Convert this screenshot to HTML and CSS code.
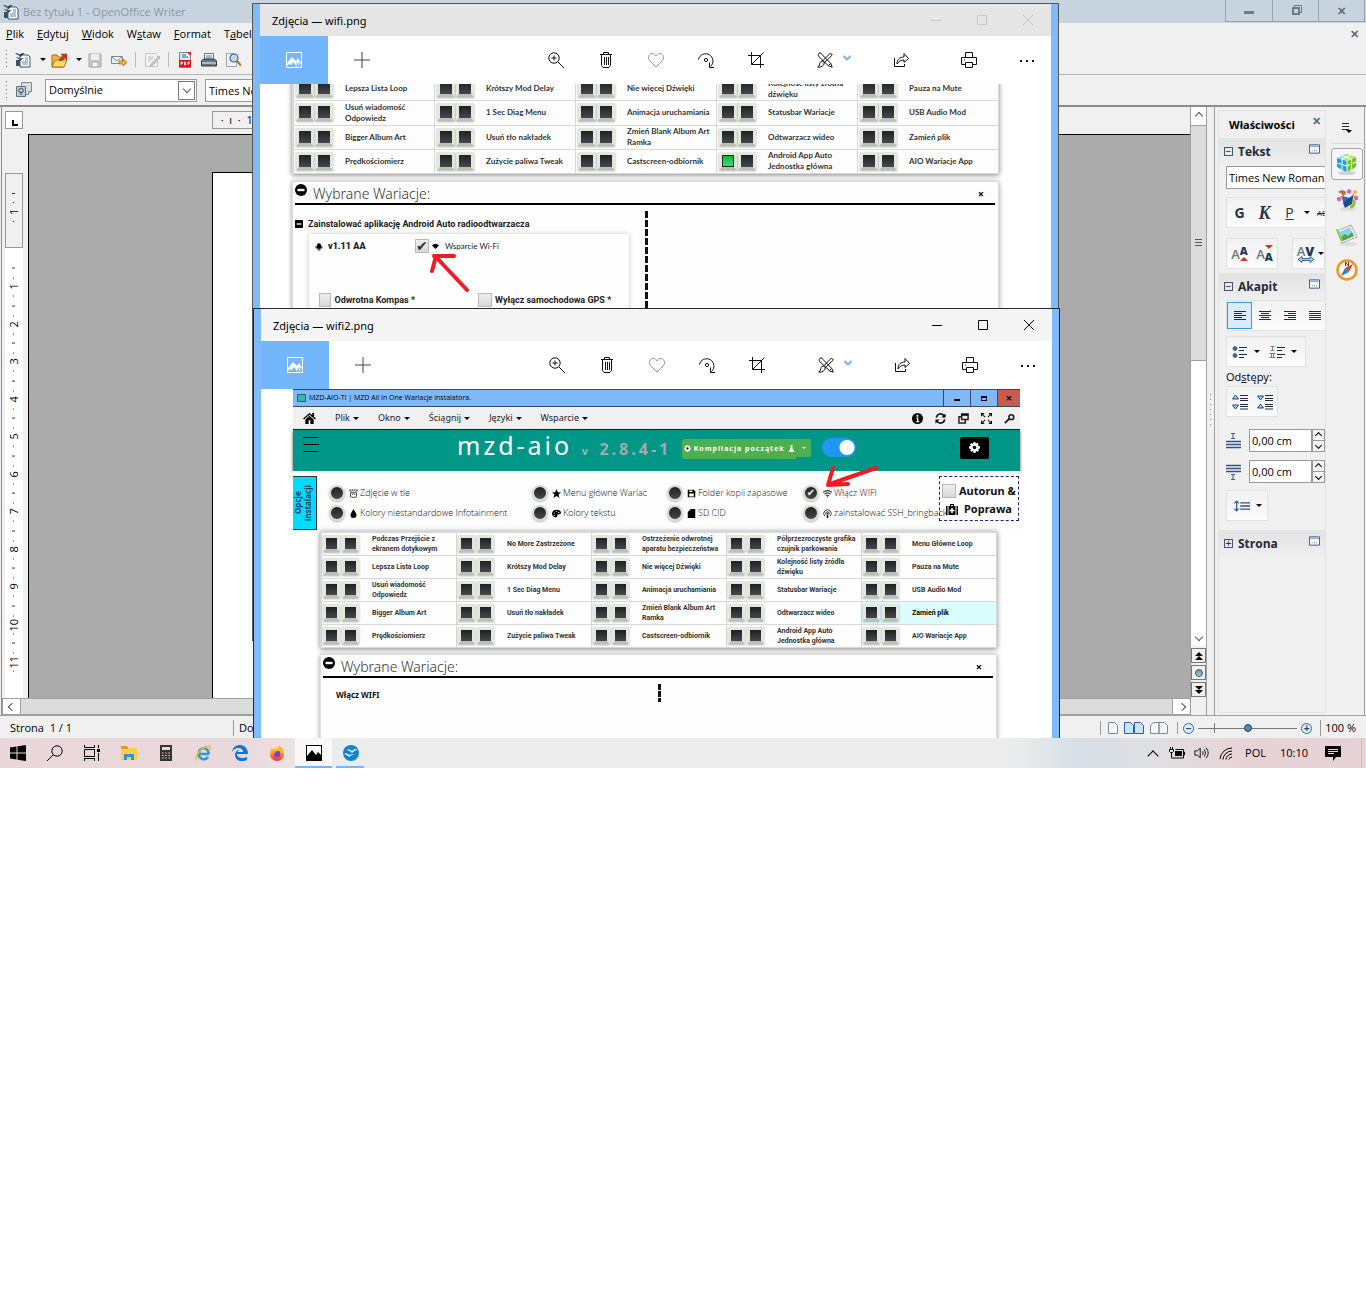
FILE: index.html
```
<!DOCTYPE html>
<html lang="pl">
<head>
    <meta charset="UTF-8">
    <meta name="viewport" content="width=device-width, initial-scale=1.0">
    <title>Bez tytułu 1 - OpenOffice Writer</title>
    <link rel="stylesheet" href="styles.css">
</head>
<body>
<svg class="sprite" aria-hidden="true">
    <defs>
        <linearGradient id="steel" x1="0" y1="0" x2="0" y2="1"><stop offset="0" stop-color="#a9cbe2"/><stop offset="1" stop-color="#2f6588"/></linearGradient>
        <linearGradient id="flame" x1="0" y1="0" x2="0" y2="1"><stop offset="0" stop-color="#ffe04a"/><stop offset=".5" stop-color="#ff8a1e"/><stop offset="1" stop-color="#f5245d"/></linearGradient>
    </defs>
    <symbol id="writer" viewBox="0 0 16 16"><path d="M5 3h8l2 2v10H5z" fill="#fff" stroke="#35546e"/><path d="M10 6h3M10 8h3M7 10h6M7 12h6" stroke="#6b8299"/><path d="M0 1c3 0 4 1 5 2 1-2 3-2 5-2-2 1-3 2-4 4C4 3 2 3 0 1zM1 5c2 0 3 1 4 2 1-1 2-1 4-1-2 1-3 2-3 3C4 7 3 7 1 5z" fill="#1f3b52"/><path d="M1 8h4v6H1z" fill="#35546e"/></symbol>
    <symbol id="folder" viewBox="0 0 16 16"><path d="M1 15V3h5l1 2h5v10z" fill="#f5b92e" stroke="#a8691a"/><path d="M1 15l3-7h12l-3 7z" fill="#fddc6c" stroke="#a8691a"/><path d="M8 8l4-4-2-2h6v6l-2-2-4 3z" fill="#c8391b" stroke="#8a220c" stroke-width=".5"/></symbol>
    <symbol id="save" viewBox="0 0 16 16"><path d="M2 2h12v13H2z" fill="#c9c9c9" stroke="#a8a8a8"/><path d="M4 2h8v6H4z" fill="#eee"/><path d="M5 10h6v5H5z" fill="#f6f6f6" stroke="#aaa"/></symbol>
    <symbol id="mail" viewBox="0 0 16 16"><path d="M.5 4.5h11v7H.5z" fill="#eef4f9" stroke="#7a8792"/><path d="M1 5l5 4 5-4" fill="none" stroke="#7a8792"/><path d="M8 9h4V7l4 3.500-4 3.500v-2H8z" fill="#f8b133" stroke="#a4600e" stroke-width=".7"/></symbol>
    <symbol id="edit" viewBox="0 0 16 16"><path d="M1.500 1.500h10l2 2v11h-12z" fill="#f2f2f2" stroke="#c6c6c6"/><path d="M4 5h6M4 7h5M4 9h3" stroke="#c6c6c6"/><path d="M15 4L8 11l-2 3 3-1 7-7z" fill="#cfcfcf" stroke="#b3b3b3"/></symbol>
    <symbol id="pdf" viewBox="0 0 16 16"><path d="M2.500.500h8l3 3v12h-11z" fill="#dce9f3" stroke="#6b8299"/><path d="M5 3h4M5 5h6" stroke="#35679a"/><path d="M10 0l4 4V0z" fill="#e0262c"/><path d="M2 8h12v7H2z" fill="#d8141c"/><path d="M4 13v-3h1.500v1.500H4M7.500 10v3h1v-3zM11 13v-3h2M11 11.500h1.500" fill="none" stroke="#fff" stroke-width=".8"/></symbol>
    <symbol id="printer" viewBox="0 0 16 16"><path d="M3.500 1.500h9v7h-9z" fill="#fff" stroke="#5c7387"/><path d="M5 4h6M5 6h6" stroke="#3a76a8"/><path d="M.500 9l2-2h11l2 2v5H.500z" fill="#6e7479" stroke="#34393d"/><path d="M1 10h14v2H1z" fill="#b6babd"/><path d="M11 12h3" stroke="#4bd13a"/></symbol>
    <symbol id="preview" viewBox="0 0 16 16"><path d="M1.500 1.500h8l2 2v11h-10z" fill="#eef3f7" stroke="#9aa6b0"/><circle cx="9" cy="6" r="4" fill="#bfdaf0" stroke="#46627b" stroke-width="1.200"/><path d="M12 9l4 4.500" stroke="#b86a17" stroke-width="2"/></symbol>
    <symbol id="styles" viewBox="0 0 16 16"><path d="M5.500.500h10v9l-3 3h-7z" fill="#d7dfe6" stroke="#7c8893"/><path d="M12.500 12.500v-3h3" fill="#fff" stroke="#7c8893"/><path d="M.500 4.500h9v10h-9z" fill="#b9cad8" stroke="#5e7385"/><path d="M3 7h4v3H3zM5 10v3" fill="#fff" stroke="#2a4055"/></symbol>

    <symbol id="photo" viewBox="0 0 16 16"><path d="M.500.500h15v15H.500z" fill="none" stroke="currentColor"/><path d="M1 11l5-6 4 4 2-3 3 5v1l-3-2 2 5-4-5 1 5-4-5-2 3-2-1-3 3z" fill="currentColor" stroke="none"/></symbol>
    <symbol id="plus" viewBox="0 0 16 16"><path d="M8 0v16M0 8h16" stroke="#444" fill="none"/></symbol>
    <symbol id="zoom-in" viewBox="0 0 16 16"><circle cx="6" cy="6" r="5.200"/><path d="M3.500 6h5M6 3.500v5M10 10l6 6"/></symbol>
    <symbol id="trash" viewBox="0 0 16 16"><path d="M2 2.500h12M5.500 2.500v-2h5v2M3.500 2.500v11l1.500 2h6l1.500-2v-11M6.500 5v8M8.500 5v8M10.500 5v8"/></symbol>
    <symbol id="heart" viewBox="0 0 16 16"><path d="M8 15L1.500 8.500C-1 5 1.500 1.500 4 1.500c2 0 3.500 1 4 2.500.500-1.500 2-2.500 4-2.500 2.500 0 5 3.500 2.500 7z" stroke="#999"/></symbol>
    <symbol id="rotate" viewBox="0 0 16 16"><path d="M.500 7.500A7.300 7.300 0 1 1 12.500 14.500M11.500 10.500v5h4.500"/><circle cx="8" cy="8" r="1.600"/></symbol>
    <symbol id="crop" viewBox="0 0 16 16"><path d="M3.500 0v12.500H16M0 3.500h12.500V16M3.500 12.500L15.500.500"/></symbol>
    <symbol id="tools" viewBox="0 0 16 16"><path d="M3 .8a2.300 2.300 0 0 0-1 4l9.500 9 3.700 1.400-1.400-3.700-9-9.200A2.300 2.300 0 0 0 3 .8zM13.500 1L5.500 9l1.800 1.800L15.300 3zM5.500 9C3 9 3 11 2.500 13L.8 15.200C4 15.500 7 14 7.300 10.800M11.500 13.500l2-2"/></symbol>
    <symbol id="chevron" viewBox="0 0 16 16"><path d="M1 4l7 7 7-7" stroke="#76b6fb" stroke-width="4"/></symbol>
    <symbol id="share" viewBox="0 0 16 16"><path d="M1.500 6v8.500h10V12M4 12c0-5 3-7 7-7V1.500l4.500 5-4.500 4V8c-3 0-5 1-7 4z"/></symbol>
    <symbol id="print" viewBox="0 0 16 16"><path d="M4.500 5.500v-5h7v5M4 12.500H.500v-7h15v7H12M4.500 10.500h7v5h-7zM3 8h1"/></symbol>
    <symbol id="more" viewBox="0 0 16 16"><path d="M1 9h2M7 9h2M13 9h2" stroke-width="2"/></symbol>
    <symbol id="win-min" viewBox="0 0 10 10"><path d="M0 5.500h10"/></symbol>
    <symbol id="win-max" viewBox="0 0 10 10"><path d="M.500.500h9v9h-9z"/></symbol>
    <symbol id="win-close" viewBox="0 0 10 10"><path d="M0 0l10 10M10 0L0 10"/></symbol>

    <symbol id="minus-circle" viewBox="0 0 12 12"><circle cx="6" cy="6" r="6"/><path d="M2.500 4.800h7v2.400h-7z" fill="#fff"/></symbol>
    <symbol id="minus-square" viewBox="0 0 12 12"><rect width="12" height="12" rx="1"/><path d="M2.500 5h7v2h-7z" fill="#fff"/></symbol>
    <symbol id="android" viewBox="0 0 12 12"><path d="M3 4a3 3 0 0 1 6 0v5H3zM1 5h1.500v4H1zM9.500 5H11v4H9.500zM4 9h1.500v3H4zM6.500 9H8v3H6.500zM3 1l1 2M9 1L8 3"/></symbol>
    <symbol id="home" viewBox="0 0 14 12"><path d="M7 0L0 6l1 1 6-5 6 5 1-1-2-2V0h-2v2.500zM7 3L2.500 7v5h3.500V8h2v4h3.500V7z"/></symbol>
    <symbol id="info" viewBox="0 0 12 12"><circle cx="6" cy="6" r="6"/><path d="M5 2h2v2H5zM4.500 5H7v4h1v1H4.500V9h1V6h-1z" fill="#fff"/></symbol>
    <symbol id="refresh" viewBox="0 0 12 12"><path d="M1.500 5A4.500 4.500 0 0 1 10 3.500M10.500 7A4.500 4.500 0 0 1 2 8.500" fill="none" stroke="#111" stroke-width="1.800"/><path d="M11.500.500V5H7zM.500 11.500V7H5z"/></symbol>
    <symbol id="restore" viewBox="0 0 12 12"><path d="M4 1h7v6H4zM3.500 4H1v7h7V7.500" fill="none" stroke="#222" stroke-width="1.600"/><path d="M4 1h7v2H4z"/></symbol>
    <symbol id="expand" viewBox="0 0 12 12"><path d="M0 0h4L0 4zM12 0v4L8 0zM0 12V8l4 4zM12 12H8l4-4z"/><path d="M1 1l3.500 3.500M11 1L7.500 4.500M1 11l3.500-3.500M11 11L7.500 7.500" stroke="#222" stroke-width="1.300"/></symbol>
    <symbol id="wrench" viewBox="0 0 12 12"><path d="M1 11l5-5" stroke="#222" stroke-width="2"/><circle cx="8" cy="4.500" r="2.600" fill="none" stroke="#222" stroke-width="1.800"/></symbol>
    <symbol id="gear" viewBox="0 0 12 12"><path d="M5 0h2l.4 1.800 1.600-1 1.500 1.500-1 1.600L12 5v2l-2 .6.9 1.600-1.500 1.500-1.700-1L7 12H5l-.6-2.200-1.700.9L1.200 9.200l1-1.700L0 7V5l2-.6-.9-1.700 1.500-1.500 1.700 1z"/><circle cx="6" cy="6" r="2" class="hole"/></symbol>
    <symbol id="flask" viewBox="0 0 12 12"><path d="M4 0h4v1H7.500v4L11 12H1l3.500-7V1H4z"/></symbol>
    <symbol id="paw" viewBox="0 0 12 12"><path d="M2 5h8v5a2 2 0 0 1-2 1H4a2 2 0 0 1-2-1zM0 2l2-1 1 3M4 0l1.500 3M8 0L6.500 3M12 2l-2-1-1 3" fill="none" stroke="#333" stroke-width="1.200"/><path d="M4 8l2-2 2 2" fill="none" stroke="#333"/></symbol>
    <symbol id="drop" viewBox="0 0 12 12"><path d="M6 0c1 3 4 5 4 8a4 4 0 0 1-8 0c0-3 3-5 4-8z"/></symbol>
    <symbol id="star" viewBox="0 0 12 12"><path d="M6 0l1.700 4.200L12 4.500 8.700 7.300 10 12 6 9.300 2 12l1.300-4.700L0 4.500l4.300-.3z"/></symbol>
    <symbol id="palette" viewBox="0 0 12 12"><path d="M6 1c4 0 6 2 6 4s-2 2-3 2-2 0-2 2-1 2-2 2C2 11 0 9 0 6s3-5 6-5z"/><path d="M2 5h2v1H2zM5 3h2v1H5zM8 4h2v1H8zM2 8h2v1H2z" fill="#fff"/></symbol>
    <symbol id="floppy" viewBox="0 0 12 12"><path d="M1 1h8l2 2v8H1z"/><path d="M3 2h4v2H3zM3 6h6v4H3z" fill="#fff"/></symbol>
    <symbol id="sdcard" viewBox="0 0 12 12"><path d="M5 0h6v12H1V4z"/></symbol>
    <symbol id="wifi" viewBox="0 0 12 12"><path d="M0 4.500a9 9 0 0 1 12 0M2 7a6 6 0 0 1 8 0M4 9.200a3 3 0 0 1 4 0" fill="none" stroke="#333" stroke-width="1.500"/><path d="M5 10h2L6 11.500z"/></symbol>
    <symbol id="podcast" viewBox="0 0 12 12"><path d="M2.500 9.500a5 5 0 1 1 7 0M4 7.500a2.500 2.500 0 1 1 4 0" fill="none" stroke="#333" stroke-width="1.200"/><circle cx="6" cy="6" r="1.200"/><path d="M5 8h2v4H5z"/></symbol>
    <symbol id="medkit" viewBox="0 0 12 12"><path d="M0 3h1.500v9H0zM10.500 3H12v9h-1.500zM2.500 3H4V1h4v2h1.500v9h-7z"/><path d="M5 2h2v1H5zM5.200 5h1.600v1.700h1.700v1.600H6.800V10H5.200V8.300H3.500V6.700h1.700z" fill="#fff"/></symbol>

    <symbol id="more-win" viewBox="0 0 12 10"><path d="M.500.500h11v9H.500z" fill="#fff" stroke="#2c4d8a"/><path d="M1 1h10v2H1z" fill="#8db4e3"/><path d="M3 7h1M5.500 7h1M8 7h1" stroke="#2c4d8a"/></symbol>
    <symbol id="al-left" viewBox="0 0 14 14"><path d="M1 2.500h12M1 4.500h8M1 6.500h12M1 8.500h8M1 10.500h12" stroke="#222b3a"/></symbol>
    <symbol id="al-center" viewBox="0 0 14 14"><path d="M1 2.500h12M3 4.500h8M1 6.500h12M3 8.500h8M1 10.500h12" stroke="#222b3a"/></symbol>
    <symbol id="al-right" viewBox="0 0 14 14"><path d="M1 2.500h12M5 4.500h8M1 6.500h12M5 8.500h8M1 10.500h12" stroke="#222b3a"/></symbol>
    <symbol id="al-just" viewBox="0 0 14 14"><path d="M1 2.500h12M1 4.500h12M1 6.500h12M1 8.500h12M1 10.500h12" stroke="#222b3a"/></symbol>
    <symbol id="bullets" viewBox="0 0 16 14"><circle cx="3" cy="3.500" r="2" fill="#3f6f96" stroke="#183a5c" stroke-width=".6"/><circle cx="3" cy="10.500" r="2" fill="#3f6f96" stroke="#183a5c" stroke-width=".6"/><path d="M7 2.500h8M7 5.500h5M7 9.500h8M7 12.500h5" stroke="#222b3a"/></symbol>
    <symbol id="numbers" viewBox="0 0 16 14"><path d="M1.500 1.500h4M3.500 1.500v4M1.500 5.500h4M.500 8.500h6M2.500 8.500v4M4.500 8.500v4M.500 12.500h6" stroke="#5c87ad" fill="none"/><path d="M8 2.500h8M8 5.500h5M8 9.500h8M8 12.500h5" stroke="#222b3a"/></symbol>
    <symbol id="sp-out" viewBox="0 0 16 16"><path d="M3.500 1l3 4h-6zM3.500 15l3-4h-6z" fill="#9bd3f5" stroke="#1d4b7d"/><path d="M8 1.500h8M8 4.500h8M8 6.500h8M8 10.500h8M8 12.500h8M8 15h8" stroke="#222b3a"/></symbol>
    <symbol id="sp-in" viewBox="0 0 16 16"><path d="M3.500 6l3-4h-6zM3.500 10l3 4h-6z" fill="#9bd3f5" stroke="#1d4b7d"/><path d="M8 1.500h8M8 4.500h8M8 6.500h8M8 10.500h8M8 12.500h8M8 15h8" stroke="#222b3a"/></symbol>
    <symbol id="sp-above" viewBox="0 0 16 16"><path d="M5 .500h4M7 1v5M5 5.500h4" stroke="#33609a"/><path d="M0 8.500h15M0 11.500h15M0 14.500h15" stroke="#2e5686" stroke-width="1.600"/></symbol>
    <symbol id="sp-below" viewBox="0 0 16 16"><path d="M5 10.500h4M7 11v5M5 15.500h4" stroke="#33609a"/><path d="M0 1.500h15M0 4.500h15M0 7.500h15" stroke="#2e5686" stroke-width="1.600"/></symbol>
    <symbol id="line-sp" viewBox="0 0 18 14"><path d="M3 2v10M.500 4L3 1.500 5.500 4M.500 10L3 12.500 5.500 10" fill="none" stroke="#33609a" stroke-width="1.400"/><path d="M7 3.500h11M7 7h11M7 10.500h11" stroke="#2e5686" stroke-width="1.600"/></symbol>
    <symbol id="swap" viewBox="0 0 16 7"><path d="M0 3.500L4 .500v2h8v-2l4 3-4 3v-2H4v2z" fill="#9bd3f5" stroke="#1d4b7d" stroke-width=".8"/></symbol>
    <symbol id="cube" viewBox="0 0 22 22"><ellipse cx="11" cy="20" rx="9" ry="2" fill="#d3d3d3"/><path d="M1 5l10 3v11l-3-1-7-4z" fill="#1ba0ea"/><path d="M11 8l9-4v10l-9 5z" fill="#6cc81e"/><path d="M1 5l9-4 3 1-8 4z" fill="#8ed9f8"/><path d="M12 1l8 3-9 4-5-2z" fill="#b6ea63"/><path d="M1 10l10 3 9-4M6 6v11M15.500 6v11M11 8v11M6 3l9 3M15 2L6 6" stroke="#fff" fill="none"/></symbol>
    <symbol id="gallery" viewBox="0 0 22 22"><ellipse cx="12" cy="20" rx="8" ry="2" fill="#ddd"/><path d="M2 3c3-3 8-2 8 1l-3 4-1-3z" fill="#c96a28"/><path d="M5 7l10 2 3-5-2 11H8z" fill="#2f6fb5"/><path d="M7 14l10-8-1 9-7 4z" fill="#1d4d86"/><path d="M14 18c4 0 5-4 4-7" stroke="#8cc63e" stroke-width="3" fill="none"/><circle cx="13" cy="2.500" r="2.200" fill="#c45fe0"/><path d="M19 0l1 2 2 1-2 1-1 3-1-3-2-1 2-1z" fill="#f7b51c"/><circle cx="3" cy="10" r="2.200" fill="#ee5aa0"/><circle cx="20" cy="9" r="2.200" fill="#ee5aa0"/></symbol>
    <symbol id="images" viewBox="0 0 22 22"><ellipse cx="12" cy="20" rx="9" ry="2" fill="#ddd"/><path d="M1 7l14-6 6 12-15 6z" fill="#fff" stroke="#a5a5a5"/><path d="M3 8l11-5 4 9-11 5z" fill="#8fd0f2"/><path d="M5 13l4-3 3 2 4-4 2 4-11 5z" fill="#4fa83d"/><path d="M1 5l5 12" stroke="#8cd048" stroke-width="2"/></symbol>
    <symbol id="compass" viewBox="0 0 22 22"><circle cx="11" cy="11" r="9.500" fill="#f6f6f6" stroke="#f0951c" stroke-width="2.500"/><path d="M17 5l-4 8-4-4z" fill="#e2401f"/><path d="M5 17l8-4-4-4z" fill="#2f7fd0"/><path d="M9.500 7V3l3 4V3" fill="none" stroke="#444"/></symbol>
    <symbol id="page1" viewBox="0 0 10 12"><path d="M.500.500h6l3 3v8h-9z"/></symbol>
    <symbol id="page2" viewBox="0 0 20 12"><path d="M.500.500h6l3 3v8h-9zM10.500.500h6l3 3v8h-9z"/></symbol>
    <symbol id="book" viewBox="0 0 18 12"><path d="M3.500.500h5.500v11H.500v-8zM14.500.500H9v11h8.500v-8z"/></symbol>

    <symbol id="windows" viewBox="0 0 16 16"><path d="M0 2.500L6.500 1.500V7.500H0zM7.500 1.300L16 0v7.500H7.500zM0 8.500h6.500v6L0 13.500zM7.500 8.500H16V16l-8.500-1.300z"/></symbol>
    <symbol id="search" viewBox="0 0 16 16"><circle cx="10" cy="6" r="5.200"/><path d="M6.300 9.700L0 16"/></symbol>
    <symbol id="taskview" viewBox="0 0 16 16"><path d="M.500 0v2.500h10V0M.500 4.500h10v7H.500zM.500 16v-2.500h10V16M14.500 0v3M14.500 8v8"/><path d="M13 4h3v3h-3z" fill="#000" stroke="none"/></symbol>
    <symbol id="explorer" viewBox="0 0 16 16"><path d="M0 1h6l1 2h9v12H0z" fill="#ffcf48"/><path d="M0 1h6l1 2v1H0z" fill="#dd9d13"/><path d="M3 15V9h10v6h-3v-3H6v3z" fill="#2f94dd"/></symbol>
    <symbol id="calc" viewBox="0 0 16 16"><path d="M2 0h12v16H2z" fill="#333"/><path d="M4 2h8v3H4z" fill="#eadadd"/><path d="M4 8h8M4 10.500h8M4 13h8" stroke="#eadadd" stroke-width="1.200" stroke-dasharray="1.500 1.700"/></symbol>
    <symbol id="ie" viewBox="0 0 16 16"><path d="M3.500 9h10.500M13 12c-1.500 2.500-5 3-7.500 1S3.500 6.500 5.500 4.500s5.500-1.500 7 .500c1 1.300 1.200 2.500 1 4" fill="none" stroke="#3499d6" stroke-width="2.600"/><path d="M2 15C-2 13 8 0 14 1c2 1 1 3 0 4" fill="none" stroke="#f2bd22" stroke-width="1.500"/></symbol>
    <symbol id="edge" viewBox="0 0 16 16"><path d="M0 7c1-5 4-7 8-7 5 0 8 4 8 9H5c0 4 6 5 10 3v3C9 18 3 15 3 10c0-3 2-5 4-5-1 1-1.500 2-1.500 2H11c0-3-2-4-5-4-2 0-4 1-6 4z" fill="#0a78d4"/></symbol>
    <symbol id="firefox" viewBox="0 0 16 16"><circle cx="8" cy="9" r="7" fill="url(#flame)"/><path d="M9 0c5 3 6 6 6 9l-5-3zM1 9l1-6 3 3z" fill="#ffb52e"/><circle cx="8" cy="9" r="3.200" fill="#7a3bd6"/><path d="M3 6c2-1 4 0 5 1-2 0-3 1-3 3-2-1-2-3-2-4z" fill="#ff9a22"/></symbol>
    <symbol id="photos" viewBox="0 0 16 16"><path d="M0 0h16v16H0z"/><path d="M1 1h14v9l-3-3-2 3-4-5-5 6z" fill="#fff"/></symbol>
    <symbol id="ooffice" viewBox="0 0 16 16"><circle cx="8" cy="8" r="8" fill="#0f84cf"/><path d="M4 5c2-1 4 0 5 1 2-2 4-2 6-1-3 0-4 1-6 3-1-2-3-2-5-3zM1 9c3-1 4 0 5 1 2-1 4-1 6-1-3 1-4 1-6 3-1-2-3-2-5-3z" fill="#fff"/></symbol>
    <symbol id="battery" viewBox="0 0 16 16"><path d="M6 6h7v5H6z" fill="#000"/><path d="M14.500 7h1v3h-1M1.500 2v2M3.500 2v2M.500 4.500h4v2l-1 1h-2l-1-1zM2.500 8v5h12V4.500H6.500" fill="none" stroke="#000"/></symbol>
    <symbol id="sound" viewBox="0 0 18 16"><path d="M1 5.500h3l3-3v11l-3-3H1zM9.500 6q1.500 2 0 4M11.500 4q3 4 0 8M13.500 2q5 6 0 12"/></symbol>
    <symbol id="net" viewBox="0 0 16 16"><path d="M1 14A12 12 0 0 1 13 3M4 14.500A9 9 0 0 1 13 6M7 14.500A6 6 0 0 1 13 9M10 14.500a3 3 0 0 1 3-2.500"/></symbol>
    <symbol id="note" viewBox="0 0 16 16"><path d="M0 1h16v11h-5l-3 4v-4H0z"/><path d="M3 4.500h10M3 6.500h10M3 8.500h6" stroke="#e8d6d9"/></symbol>
</svg>

<div class="desktop">
    <div class="writer">
        <header class="writer-title">
            <svg class="i16"><use href="#writer"/></svg>
            <span>Bez tytułu 1 - OpenOffice Writer</span>
            <div class="writer-controls">
                <button aria-label="Minimalizuj"><i class="bar"></i></button>
                <button aria-label="Przywróć"><i class="box"></i></button>
                <button aria-label="Zamknij">✕</button>
            </div>
        </header>
        <nav class="menubar">
            <a href="#"><u>P</u>lik</a>
            <a href="#"><u>E</u>dytuj</a>
            <a href="#"><u>W</u>idok</a>
            <a href="#">W<u>s</u>taw</a>
            <a href="#"><u>F</u>ormat</a>
            <a href="#">T<u>a</u>bela</a>
            <button class="doc-close" aria-label="Zamknij dokument">✕</button>
        </nav>
        <div class="toolbar">
            <i class="grip"></i>
            <button aria-label="Nowy"><svg class="i16"><use href="#writer"/></svg></button><i class="caret"></i>
            <button aria-label="Otwórz"><svg class="i16"><use href="#folder"/></svg></button><i class="caret"></i>
            <button aria-label="Zapisz"><svg class="i16"><use href="#save"/></svg></button>
            <button aria-label="Wyślij"><svg class="i16"><use href="#mail"/></svg></button>
            <i class="sep"></i>
            <button aria-label="Edytuj plik"><svg class="i16"><use href="#edit"/></svg></button>
            <i class="sep"></i>
            <button aria-label="PDF"><svg class="i16"><use href="#pdf"/></svg></button>
            <button aria-label="Drukuj"><svg class="i16"><use href="#printer"/></svg></button>
            <button aria-label="Podgląd"><svg class="i16"><use href="#preview"/></svg></button>
        </div>
        <div class="toolbar format-bar">
            <i class="grip"></i>
            <button aria-label="Style"><svg class="i16"><use href="#styles"/></svg></button>
            <div class="style-box">
                <select aria-label="Styl akapitu"><option>Domyślnie</option></select>
                <span><i class="ang down"></i></span>
            </div>
            <input class="font-input" aria-label="Czcionka" value="Times New Roman">
        </div>

        <div class="work">
            <div class="editor">
                <div class="ruler-row">
                    <button class="tab-kind" aria-label="Tabulator"><i></i></button>
                    <div class="h-ruler">·&nbsp; ı&nbsp; ·&nbsp; 1</div>
                </div>
                <div class="doc-row">
                    <div class="v-ruler">
                        <div class="v-margin"><span class="tick">1</span></div>
                        <div class="v-body">
                            <span class="tick">1</span><span class="tick">2</span><span class="tick">3</span><span class="tick">4</span>
                            <span class="tick">5</span><span class="tick">6</span><span class="tick">7</span><span class="tick">8</span>
                            <span class="tick">9</span><span class="tick">10</span><span class="tick">11</span>
                        </div>
                    </div>
                    <div class="canvas"><div class="paper"></div></div>
                </div>
                <div class="h-scroll">
                    <button aria-label="W lewo"><i class="ang left"></i></button>
                    <div class="thumb"></div>
                    <button aria-label="W prawo"><i class="ang right"></i></button>
                </div>
            </div>
            <div class="v-scroll">
                <button aria-label="W górę"><i class="ang up"></i></button>
                <div class="thumb"><i></i></div>
                <div class="track"></div>
                <button aria-label="W dół"><i class="ang down"></i></button>
                <div class="nav-btns">
                    <button aria-label="Poprzednia strona"><i class="tri up"></i><i class="tri up"></i></button>
                    <button aria-label="Nawigacja"><i class="ball"></i></button>
                    <button aria-label="Następna strona"><i class="tri"></i><i class="tri"></i></button>
                </div>
            </div>
            <div class="splitter"></div>
            <aside class="sidebar">
                <div class="props">
                    <h2>Właściwości <button aria-label="Zamknij panel">✕</button></h2>
                    <h3><i class="fold">−</i>Tekst<svg class="more-icon"><use href="#more-win"/></svg></h3>
                    <div class="section">
                        <input class="side-font" aria-label="Czcionka" value="Times New Roman">
                        <div class="group wide text-tools">
                            <button><b>G</b></button><button><em>K</em></button><button><u>P</u></button><i class="caret"></i><button class="strike"><s>AB</s></button>
                        </div>
                        <div class="groups">
                            <div class="group size-tools"><button>A<b>A</b><i class="red-up"></i></button><button>A<b>A</b><i class="red-down"></i></button></div>
                            <div class="group space-tools"><button>A<b>V</b><svg><use href="#swap"/></svg></button><i class="caret"></i></div>
                        </div>
                    </div>
                    <h3><i class="fold">−</i>Akapit<svg class="more-icon"><use href="#more-win"/></svg></h3>
                    <div class="section para">
                        <div class="group wide aligns">
                            <button class="on" aria-label="Do lewej"><svg><use href="#al-left"/></svg></button>
                            <button aria-label="Do środka"><svg><use href="#al-center"/></svg></button>
                            <button aria-label="Do prawej"><svg><use href="#al-right"/></svg></button>
                            <button aria-label="Justowanie"><svg><use href="#al-just"/></svg></button>
                        </div>
                        <div class="group lists">
                            <button aria-label="Punktory"><svg><use href="#bullets"/></svg></button><i class="caret"></i>
                            <button aria-label="Numeracja"><svg><use href="#numbers"/></svg></button><i class="caret"></i>
                        </div>
                        <p>Od<u>s</u>tępy:</p>
                        <div class="group spacing">
                            <button aria-label="Zwiększ"><svg class="i16"><use href="#sp-out"/></svg></button>
                            <button aria-label="Zmniejsz"><svg class="i16"><use href="#sp-in"/></svg></button>
                        </div>
                        <label class="spin"><svg class="i16"><use href="#sp-above"/></svg><input value="0,00 cm" aria-label="Nad akapitem"><span><i class="ang up"></i><i class="ang down"></i></span></label>
                        <label class="spin"><svg class="i16"><use href="#sp-below"/></svg><input value="0,00 cm" aria-label="Pod akapitem"><span><i class="ang up"></i><i class="ang down"></i></span></label>
                        <div class="group lines">
                            <button aria-label="Interlinia"><svg><use href="#line-sp"/></svg></button><i class="caret"></i>
                        </div>
                    </div>
                    <h3><i class="fold">+</i>Strona<svg class="more-icon"><use href="#more-win"/></svg></h3>
                </div>
                <div class="side-tabs">
                    <button class="side-menu" aria-label="Menu"><i></i><i class="caret"></i></button>
                    <button class="active" aria-label="Właściwości"><svg><use href="#cube"/></svg></button>
                    <button aria-label="Style"><svg><use href="#gallery"/></svg></button>
                    <button aria-label="Galeria"><svg><use href="#images"/></svg></button>
                    <button aria-label="Nawigator"><svg><use href="#compass"/></svg></button>
                </div>
            </aside>
        </div>

        <footer class="statusbar">
            <span class="page-no">Strona&nbsp; 1 / 1</span>
            <span class="page-style">Domyślnie</span>
            <div class="views">
                <svg class="v1"><use href="#page1"/></svg>
                <svg class="v2"><use href="#page2"/></svg>
                <svg class="v3"><use href="#book"/></svg>
            </div>
            <div class="zoomer">
                <i class="knob">−</i>
                <input type="range" min="0" max="100" value="50" aria-label="Powiększenie">
                <i class="knob">+</i>
            </div>
            <span class="percent">100 %</span>
        </footer>
    </div>

    <section class="window back">
        <header class="win-title">
            <span>Zdjęcia — wifi.png</span>
            <button aria-label="Minimalizuj"><svg><use href="#win-min"/></svg></button>
            <button aria-label="Maksymalizuj"><svg><use href="#win-max"/></svg></button>
            <button aria-label="Zamknij"><svg><use href="#win-close"/></svg></button>
        </header>
        <div class="photo-bar">
            <button class="all" aria-label="Kolekcja"><svg class="i16"><use href="#photo"/></svg></button>
            <button class="add" aria-label="Dodaj"><svg class="i16"><use href="#plus"/></svg></button>
            <button aria-label="Powiększ"><svg class="i16"><use href="#zoom-in"/></svg></button>
            <button aria-label="Usuń"><svg class="i16"><use href="#trash"/></svg></button>
            <button aria-label="Ulubione"><svg class="i16"><use href="#heart"/></svg></button>
            <button aria-label="Obróć"><svg class="i16"><use href="#rotate"/></svg></button>
            <button aria-label="Przytnij"><svg class="i16"><use href="#crop"/></svg></button>
            <button class="tools" aria-label="Edytuj"><svg class="i16"><use href="#tools"/></svg><svg class="chev"><use href="#chevron"/></svg></button>
            <button class="far" aria-label="Udostępnij"><svg class="i16"><use href="#share"/></svg></button>
            <button class="far" aria-label="Drukuj"><svg class="i16"><use href="#print"/></svg></button>
            <button class="dots" aria-label="Więcej"><svg class="i16"><use href="#more"/></svg></button>
        </div>
        <div class="photo-view">
            <div class="shot shot-one">
                <div class="variants">
                    <div><input type="radio" name="a1" id="a1"><input type="radio" name="a1" aria-label="Usuń"><label for="a1">Lepsza Lista Loop</label></div>
                    <div><input type="radio" name="a2" id="a2"><input type="radio" name="a2" aria-label="Usuń"><label for="a2">Krótszy Mod Delay</label></div>
                    <div><input type="radio" name="a3" id="a3"><input type="radio" name="a3" aria-label="Usuń"><label for="a3">Nie więcej Dźwięki</label></div>
                    <div><input type="radio" name="a4" id="a4"><input type="radio" name="a4" aria-label="Usuń"><label for="a4">Kolejność listy źródła<br>dźwięku</label></div>
                    <div><input type="radio" name="a5" id="a5"><input type="radio" name="a5" aria-label="Usuń"><label for="a5">Pauza na Mute</label></div>
                    <div><input type="radio" name="a6" id="a6"><input type="radio" name="a6" aria-label="Usuń"><label for="a6">Usuń wiadomość<br>Odpowiedz</label></div>
                    <div><input type="radio" name="a7" id="a7"><input type="radio" name="a7" aria-label="Usuń"><label for="a7">1 Sec Diag Menu</label></div>
                    <div><input type="radio" name="a8" id="a8"><input type="radio" name="a8" aria-label="Usuń"><label for="a8">Animacja uruchamiania</label></div>
                    <div><input type="radio" name="a9" id="a9"><input type="radio" name="a9" aria-label="Usuń"><label for="a9">Statusbar Wariacje</label></div>
                    <div><input type="radio" name="a10" id="a10"><input type="radio" name="a10" aria-label="Usuń"><label for="a10">USB Audio Mod</label></div>
                    <div><input type="radio" name="a11" id="a11"><input type="radio" name="a11" aria-label="Usuń"><label for="a11">Bigger Album Art</label></div>
                    <div><input type="radio" name="a12" id="a12"><input type="radio" name="a12" aria-label="Usuń"><label for="a12">Usuń tło nakładek</label></div>
                    <div><input type="radio" name="a13" id="a13"><input type="radio" name="a13" aria-label="Usuń"><label for="a13">Zmień Blank Album Art<br>Ramka</label></div>
                    <div><input type="radio" name="a14" id="a14"><input type="radio" name="a14" aria-label="Usuń"><label for="a14">Odtwarzacz wideo</label></div>
                    <div><input type="radio" name="a15" id="a15"><input type="radio" name="a15" aria-label="Usuń"><label for="a15">Zamień plik</label></div>
                    <div><input type="radio" name="a16" id="a16"><input type="radio" name="a16" aria-label="Usuń"><label for="a16">Prędkościomierz</label></div>
                    <div><input type="radio" name="a17" id="a17"><input type="radio" name="a17" aria-label="Usuń"><label for="a17">Zużycie paliwa Tweak</label></div>
                    <div><input type="radio" name="a18" id="a18"><input type="radio" name="a18" aria-label="Usuń"><label for="a18">Castscreen-odbiornik</label></div>
                    <div><input type="radio" name="a19" id="a19" checked><input type="radio" name="a19" aria-label="Usuń"><label for="a19">Android App Auto<br>Jednostka główna</label></div>
                    <div><input type="radio" name="a20" id="a20"><input type="radio" name="a20" aria-label="Usuń"><label for="a20">AIO Wariacje App</label></div>
                </div>
                <div class="chosen">
                    <h4><svg><use href="#minus-circle"/></svg><span>Wybrane Wariacje:</span><button aria-label="Zamknij">×</button></h4>
                    <div class="chosen-cols">
                        <div>
                            <p class="app-head"><svg><use href="#minus-square"/></svg>Zainstalować aplikację Android Auto radioodtwarzacza</p>
                            <div class="app-card">
                                <b><svg><use href="#android"/></svg>v1.11 AA</b>
                                <label class="wifi-opt"><input type="checkbox" checked><svg viewBox="0 0 12 10"><path d="M0 4q6-6 12 0L6 10z"/></svg>Wsparcie Wi-Fi</label>
                                <label><input type="checkbox">Odwrotna Kompas *</label>
                                <label><input type="checkbox">Wyłącz samochodowa GPS *</label>
                            </div>
                        </div>
                        <div class="dashes"></div>
                    </div>
                </div>
                <svg class="arrow arrow-one" viewBox="0 0 42 42"><path d="M37 38L6 5M2 19L6 4M4 4h20"/></svg>
            </div>
        </div>
    </section>

    <section class="window front">
        <header class="win-title">
            <span>Zdjęcia — wifi2.png</span>
            <button aria-label="Minimalizuj"><svg><use href="#win-min"/></svg></button>
            <button aria-label="Maksymalizuj"><svg><use href="#win-max"/></svg></button>
            <button aria-label="Zamknij"><svg><use href="#win-close"/></svg></button>
        </header>
        <div class="photo-bar">
            <button class="all" aria-label="Kolekcja"><svg class="i16"><use href="#photo"/></svg></button>
            <button class="add" aria-label="Dodaj"><svg class="i16"><use href="#plus"/></svg></button>
            <button aria-label="Powiększ"><svg class="i16"><use href="#zoom-in"/></svg></button>
            <button aria-label="Usuń"><svg class="i16"><use href="#trash"/></svg></button>
            <button aria-label="Ulubione"><svg class="i16"><use href="#heart"/></svg></button>
            <button aria-label="Obróć"><svg class="i16"><use href="#rotate"/></svg></button>
            <button aria-label="Przytnij"><svg class="i16"><use href="#crop"/></svg></button>
            <button class="tools" aria-label="Edytuj"><svg class="i16"><use href="#tools"/></svg><svg class="chev"><use href="#chevron"/></svg></button>
            <button class="far" aria-label="Udostępnij"><svg class="i16"><use href="#share"/></svg></button>
            <button class="far" aria-label="Drukuj"><svg class="i16"><use href="#print"/></svg></button>
            <button class="dots" aria-label="Więcej"><svg class="i16"><use href="#more"/></svg></button>
        </div>
        <div class="photo-view">
            <div class="shot shot-two">
                <div class="aio-title">
                    <i class="aio-logo"></i><span>MZD-AIO-TI | MZD All In One Wariacje instalatora.</span>
                    <button aria-label="Minimalizuj"><i class="m"></i></button><button aria-label="Maksymalizuj"><i class="x"></i></button><button class="red" aria-label="Zamknij">×</button>
                </div>
                <nav class="aio-menu">
                    <svg class="home"><use href="#home"/></svg>
                    <a href="#">Plik<i class="caret"></i></a>
                    <a href="#">Okno<i class="caret"></i></a>
                    <a href="#">Ściągnij<i class="caret"></i></a>
                    <a href="#">Języki<i class="caret"></i></a>
                    <a href="#">Wsparcie<i class="caret"></i></a>
                    <div class="aio-icons">
                        <svg><use href="#info"/></svg><svg><use href="#refresh"/></svg><svg><use href="#restore"/></svg><svg><use href="#expand"/></svg><svg><use href="#wrench"/></svg>
                    </div>
                </nav>
                <div class="aio-head">
                    <button class="burger" aria-label="Menu"><i></i><i></i><i></i></button>
                    <h1>mzd-aio <small>v</small> <b>2.8.4-1</b></h1>
                    <button class="compile"><svg><use href="#gear"/></svg>Kompilacja początek<svg><use href="#flask"/></svg></button><button class="compile-more" aria-label="Więcej"><i class="caret"></i></button>
                    <input class="toggle" type="checkbox" checked aria-label="Przełącz">
                    <span class="hint">T</span>
                    <button class="cog" aria-label="Ustawienia"><svg><use href="#gear"/></svg></button>
                </div>
                <div class="options">
                    <div class="opt-tab">Opcje<br>instalacji</div>
                    <div class="opt-grid">
                        <label><input type="checkbox"><svg><use href="#paw"/></svg>Zdjęcie w tle</label>
                        <label><input type="checkbox"><svg><use href="#star"/></svg>Menu główne Wariac</label>
                        <label><input type="checkbox"><svg><use href="#floppy"/></svg>Folder kopii zapasowe</label>
                        <label><input type="checkbox" checked><svg><use href="#wifi"/></svg>Włącz WIFI</label>
                        <label><input type="checkbox"><svg><use href="#drop"/></svg>Kolory niestandardowe Infotainment</label>
                        <label><input type="checkbox"><svg><use href="#palette"/></svg>Kolory tekstu</label>
                        <label><input type="checkbox"><svg><use href="#sdcard"/></svg>SD CID</label>
                        <label><input type="checkbox"><svg><use href="#podcast"/></svg>zainstalować SSH_bringback</label>
                    </div>
                    <label class="autorun"><input type="checkbox"><span>Autorun &amp;</span><svg><use href="#medkit"/></svg><span>Poprawa</span></label>
                </div>
                <div class="variants">
                    <div><input type="radio" name="b1" id="b1"><input type="radio" name="b1" aria-label="Usuń"><label for="b1">Podczas Przejście z<br>ekranem dotykowym</label></div>
                    <div><input type="radio" name="b2" id="b2"><input type="radio" name="b2" aria-label="Usuń"><label for="b2">No More Zastrzeżone</label></div>
                    <div><input type="radio" name="b3" id="b3"><input type="radio" name="b3" aria-label="Usuń"><label for="b3">Ostrzeżenie odwrotnej<br>aparatu bezpieczeństwa</label></div>
                    <div><input type="radio" name="b4" id="b4"><input type="radio" name="b4" aria-label="Usuń"><label for="b4">Półprzezroczyste grafika<br>czujnik parkowania</label></div>
                    <div><input type="radio" name="b5" id="b5"><input type="radio" name="b5" aria-label="Usuń"><label for="b5">Menu Główne Loop</label></div>
                    <div><input type="radio" name="b6" id="b6"><input type="radio" name="b6" aria-label="Usuń"><label for="b6">Lepsza Lista Loop</label></div>
                    <div><input type="radio" name="b7" id="b7"><input type="radio" name="b7" aria-label="Usuń"><label for="b7">Krótszy Mod Delay</label></div>
                    <div><input type="radio" name="b8" id="b8"><input type="radio" name="b8" aria-label="Usuń"><label for="b8">Nie więcej Dźwięki</label></div>
                    <div><input type="radio" name="b9" id="b9"><input type="radio" name="b9" aria-label="Usuń"><label for="b9">Kolejność listy źródła<br>dźwięku</label></div>
                    <div><input type="radio" name="b10" id="b10"><input type="radio" name="b10" aria-label="Usuń"><label for="b10">Pauza na Mute</label></div>
                    <div><input type="radio" name="b11" id="b11"><input type="radio" name="b11" aria-label="Usuń"><label for="b11">Usuń wiadomość<br>Odpowiedz</label></div>
                    <div><input type="radio" name="b12" id="b12"><input type="radio" name="b12" aria-label="Usuń"><label for="b12">1 Sec Diag Menu</label></div>
                    <div><input type="radio" name="b13" id="b13"><input type="radio" name="b13" aria-label="Usuń"><label for="b13">Animacja uruchamiania</label></div>
                    <div><input type="radio" name="b14" id="b14"><input type="radio" name="b14" aria-label="Usuń"><label for="b14">Statusbar Wariacje</label></div>
                    <div><input type="radio" name="b15" id="b15"><input type="radio" name="b15" aria-label="Usuń"><label for="b15">USB Audio Mod</label></div>
                    <div><input type="radio" name="b16" id="b16"><input type="radio" name="b16" aria-label="Usuń"><label for="b16">Bigger Album Art</label></div>
                    <div><input type="radio" name="b17" id="b17"><input type="radio" name="b17" aria-label="Usuń"><label for="b17">Usuń tło nakładek</label></div>
                    <div><input type="radio" name="b18" id="b18"><input type="radio" name="b18" aria-label="Usuń"><label for="b18">Zmień Blank Album Art<br>Ramka</label></div>
                    <div><input type="radio" name="b19" id="b19"><input type="radio" name="b19" aria-label="Usuń"><label for="b19">Odtwarzacz wideo</label></div>
                    <div class="hover"><input type="radio" name="b20" id="b20"><input type="radio" name="b20" aria-label="Usuń"><label for="b20">Zamień plik</label></div>
                    <div><input type="radio" name="b21" id="b21"><input type="radio" name="b21" aria-label="Usuń"><label for="b21">Prędkościomierz</label></div>
                    <div><input type="radio" name="b22" id="b22"><input type="radio" name="b22" aria-label="Usuń"><label for="b22">Zużycie paliwa Tweak</label></div>
                    <div><input type="radio" name="b23" id="b23"><input type="radio" name="b23" aria-label="Usuń"><label for="b23">Castscreen-odbiornik</label></div>
                    <div><input type="radio" name="b24" id="b24"><input type="radio" name="b24" aria-label="Usuń"><label for="b24">Android App Auto<br>Jednostka główna</label></div>
                    <div><input type="radio" name="b25" id="b25"><input type="radio" name="b25" aria-label="Usuń"><label for="b25">AIO Wariacje App</label></div>
                </div>
                <div class="chosen">
                    <h4><svg><use href="#minus-circle"/></svg><span>Wybrane Wariacje:</span><button aria-label="Zamknij">×</button></h4>
                    <div class="chosen-cols">
                        <div><p class="picked">Włącz WIFI</p></div>
                        <div class="dashes"></div>
                    </div>
                </div>
                <svg class="arrow arrow-two" viewBox="0 0 56 26"><path d="M52 4L6 20M9 4L4 21M4 21l20-1"/></svg>
            </div>
        </div>
    </section>
</div>

<nav class="taskbar">
    <button aria-label="Start"><svg class="i16"><use href="#windows"/></svg></button>
    <button class="line" aria-label="Szukaj"><svg class="i16"><use href="#search"/></svg></button>
    <button class="line" aria-label="Widok zadań"><svg class="i16"><use href="#taskview"/></svg></button>
    <button aria-label="Eksplorator"><svg class="i16"><use href="#explorer"/></svg></button>
    <button aria-label="Kalkulator"><svg class="i16"><use href="#calc"/></svg></button>
    <button aria-label="Internet Explorer"><svg class="i16"><use href="#ie"/></svg></button>
    <button aria-label="Edge"><svg class="i16"><use href="#edge"/></svg></button>
    <button aria-label="Firefox"><svg class="i16"><use href="#firefox"/></svg></button>
    <button class="current" aria-label="Zdjęcia"><svg class="i16"><use href="#photos"/></svg></button>
    <button class="open" aria-label="OpenOffice"><svg class="i16"><use href="#ooffice"/></svg></button>
    <div class="tray">
        <i class="ang up"></i>
        <svg class="i16"><use href="#battery"/></svg>
        <svg class="i16 line"><use href="#sound"/></svg>
        <svg class="i16 line"><use href="#net"/></svg>
        <span>POL</span>
        <time>10:10</time>
        <svg class="i16 note"><use href="#note"/></svg>
    </div>
</nav>
</body>
</html>
```

FILE: styles.css
```
* {
    box-sizing: border-box;
}
body {
    margin: 0;
    background: #fff;
    font-family: "Open Sans", "Noto Sans", sans-serif;
    font-size: 11px;
    line-height: 16px;
    color: #000;
}
button {
    padding: 0;
    border: 0;
    background: none;
    font: inherit;
    color: inherit;
}
input, select {
    font: inherit;
    color: inherit;
    margin: 0;
}
a {
    color: inherit;
    text-decoration: none;
}
h1, h2, h3, h4, p {
    margin: 0;
}
svg {
    display: block;
    flex: none;
}
.sprite {
    position: absolute;
    width: 0;
    height: 0;
}
.i16 {
    width: 16px;
    height: 16px;
}
.caret {
    flex: none;
    border: 3px solid transparent;
    border-top-color: #000;
    border-bottom: 0;
}
.ang {
    display: block;
    width: 6px;
    height: 6px;
    border: solid #555;
    border-width: 1px 0 0 1px;
}
.ang.up { transform: rotate(45deg); }
.ang.left { transform: rotate(-45deg); }
.ang.right { transform: rotate(135deg); }
.ang.down { transform: rotate(225deg); }

/* Writer */
.desktop {
    position: relative;
    overflow: hidden;
}
.writer {
    display: flex;
    flex-direction: column;
    background: #f0f0f0;
}
.writer-title {
    display: flex;
    align-items: center;
    height: 23px;
    padding-left: 3px;
    background: #c7d3df;
    color: #8c97a2;
}
.writer-title span {
    margin-left: 4px;
}
.writer-controls {
    display: flex;
    align-self: flex-start;
    margin: 0 1px 0 auto;
    border: 1px solid #99a4ae;
    border-top: 0;
}
.writer-controls button {
    display: flex;
    align-items: center;
    justify-content: center;
    width: 46px;
    height: 21px;
    color: #5d6b78;
    font-weight: bold;
}
.writer-controls button + button {
    border-left: 1px solid #99a4ae;
}
.writer-controls .bar {
    width: 10px;
    height: 3px;
    margin-top: 4px;
    background: #6f7b86;
}
.writer-controls .box {
    width: 8px;
    height: 8px;
    border: 2px solid #6f7b86;
    box-shadow: 2px -2px 0 -1px #c7d3df, 2px -2px 0 0 #6f7b86;
}
.menubar {
    display: flex;
    align-items: center;
    gap: 1px;
    height: 22px;
}
.menubar a {
    padding: 0 6px;
}
.doc-close {
    margin: 0 7px 0 auto;
    color: #5d6b78;
    font-weight: bold;
}
.toolbar {
    display: flex;
    align-items: center;
    height: 30px;
    padding: 0 4px 0 6px;
    gap: 8px;
    border-bottom: 1px solid #b5b5b5;
}
.toolbar .caret {
    margin: 0 0 0 1px;
}
.toolbar .caret + button {
    margin-left: -3px;
}
.grip {
    width: 1px;
    height: 19px;
    background: repeating-linear-gradient(#777 0 1px, transparent 1px 4px);
}
.sep {
    width: 1px;
    height: 15px;
    background: #bbb;
}
.format-bar {
    height: 32px;
    gap: 12px;
    border-bottom: 2px solid #8c8c8c;
}
.format-bar .grip {
    margin-right: -3px;
}
.style-box {
    position: relative;
    flex: none;
    margin-left: 1px;
}
.style-box select {
    display: block;
    width: 152px;
    height: 23px;
    padding: 0 3px;
    border: 1px solid #999;
    border-radius: 0;
    appearance: none;
    background: #fff;
}
.style-box span {
    position: absolute;
    top: 2px;
    right: 2px;
    display: flex;
    justify-content: center;
    width: 17px;
    height: 19px;
    padding-top: 4px;
    border: 1px solid #777;
    pointer-events: none;
}
.font-input {
    width: 160px;
    height: 23px;
    padding: 0 3px;
    border: 1px solid #999;
    margin-left: -4px;
}
.work {
    display: flex;
    height: 609px;
    border-bottom: 1px solid #a0a0a0;
}
.editor {
    flex: 1;
    min-width: 0;
    display: flex;
    flex-direction: column;
    border-left: 1px solid #8c8c8c;
    margin-left: 1px;
}
.ruler-row {
    display: flex;
    height: 27px;
    padding: 4px 0 0 3px;
}
.tab-kind {
    width: 18px;
    height: 18px;
    padding: 6px 0 0 6px;
    border: 1px solid #999;
    background: #fff;
}
.tab-kind i {
    display: block;
    width: 6px;
    height: 6px;
    border: solid #000;
    border-width: 0 0 2px 2px;
}
.h-ruler {
    width: 800px;
    height: 18px;
    margin-left: 189px;
    margin-right: 200px;
    padding-left: 8px;
    border: 1px solid #999;
}
.doc-row {
    flex: 1;
    display: flex;
    min-height: 0;
    overflow: hidden;
}
.v-ruler {
    width: 18px;
    margin: 39px 5px 0 3px;
}
.v-margin {
    height: 75px;
    padding-top: 19px;
    border: 1px solid #999;
}
.v-body {
    display: flex;
    flex-direction: column;
    height: 451px;
    padding: 20px 0 18px;
    background: #fff;
}
.tick {
    display: flex;
    align-items: center;
    justify-content: center;
    flex: 1;
    writing-mode: vertical-rl;
    transform: rotate(180deg);
    background:
        linear-gradient(#333, #333) 50% 100% / 3px 1px no-repeat,
        linear-gradient(#333, #333) 50% 25% / 1px 1px no-repeat,
        linear-gradient(#333, #333) 50% 75% / 1px 1px no-repeat;
}
.v-margin .tick {
    height: 38px;
}
.canvas {
    flex: 1;
    padding: 37px 0 0 183px;
    border: solid #000;
    border-width: 1px 0 0 1px;
    background: #ababab;
}
.paper {
    width: 794px;
    max-width: 84%;
    height: 600px;
    background: #fff;
    border: 1px solid #000;
}
.h-scroll {
    display: flex;
    height: 17px;
    border: 1px solid #a0a0a0;
    border-right: 0;
}
.h-scroll button {
    width: 17px;
    display: flex;
    align-items: center;
    justify-content: center;
    background: #fff;
}
.h-scroll .thumb {
    flex: 1;
    background: #dcdcdc;
    border: solid #a0a0a0;
    border-width: 0 1px;
}
.v-scroll {
    display: flex;
    flex-direction: column;
    width: 17px;
    border: solid #a0a0a0;
    border-width: 0 1px;
    background: #f0f0f0;
}
.v-scroll > button {
    display: flex;
    align-items: center;
    justify-content: center;
    height: 18px;
    background: #fff;
}
.v-scroll .thumb {
    display: flex;
    align-items: center;
    justify-content: center;
    height: 236px;
    background: #dcdcdc;
    border: solid #a0a0a0;
    border-width: 1px 0;
}
.v-scroll .thumb i {
    width: 7px;
    height: 8px;
    background: repeating-linear-gradient(#555 0 1px, transparent 1px 3px);
}
.track {
    flex: 1;
    background: #fff;
}
.nav-btns {
    display: grid;
    gap: 2px;
    padding: 2px 0 18px;
}
.nav-btns button {
    display: flex;
    flex-direction: column;
    align-items: center;
    justify-content: center;
    height: 15px;
    border: 1px solid #777;
}
.tri {
    border: 4px solid transparent;
    border-top-color: #000;
    border-bottom: 0;
}
.tri.up {
    transform: rotate(180deg);
}
.ball {
    width: 8px;
    height: 8px;
    border: 1px solid #456;
    border-radius: 50%;
    background: linear-gradient(#5d93b8, #a5cbe3);
}
.splitter {
    width: 7px;
    background: repeating-linear-gradient(#888 0 1px, transparent 1px 5px) 3px 287px / 1px 33px no-repeat;
}

/* Sidebar */
.sidebar {
    display: flex;
    width: 151px;
    margin-right: 1px;
    padding: 3px 0 2px 3px;
    border: solid #a0a0a0;
    border-width: 0 1px;
}
.props {
    width: 108px;
    border: 1px solid #e2e2e2;
    overflow: hidden;
}
.props h2 {
    display: flex;
    align-items: center;
    height: 27px;
    padding: 0 4px 0 10px;
    font-size: 11px;
}
.props h2 button {
    margin: -8px 0 0 auto;
    color: #5d6b78;
}
.props h3 {
    display: flex;
    align-items: center;
    height: 27px;
    padding: 0 5px;
    font-size: 12px;
    color: #222b3a;
    background: linear-gradient(#e2e2e2, #efefef);
}
.fold {
    width: 9px;
    height: 9px;
    margin-right: 5px;
    border: 1px solid #44546a;
    font: 10px/7px "Liberation Sans", sans-serif;
    text-align: center;
}
.more-icon {
    width: 11px;
    height: 10px;
    margin: -6px 0 0 auto;
}
.section {
    padding: 1px 0 4px 7px;
}
.side-font {
    width: 120px;
    height: 23px;
    padding: 0 2px;
    border: 1px solid #999;
    background: #fff;
}
.group {
    display: flex;
    align-items: center;
    width: max-content;
    height: 31px;
    border: 1px solid #e2e2e2;
    background: linear-gradient(#f2f2f2, #fbfbfb);
}
.group button {
    display: flex;
    align-items: center;
    justify-content: center;
    width: 25px;
    height: 27px;
}
.group svg {
    width: 16px;
    height: 14px;
}
.group.wide {
    width: 120px;
}
.text-tools {
    margin-top: 8px;
    font-size: 14px;
    color: #2a3444;
}
.text-tools em {
    font-family: "Liberation Serif", serif;
    font-size: 18px;
    font-weight: bold;
}
.text-tools .caret {
    margin: 0 2px 0 2px;
}
.text-tools .strike {
    width: 20px;
    font-size: 8px;
}
.groups {
    display: flex;
    gap: 14px;
    margin-top: 10px;
}
.size-tools button, .space-tools button {
    position: relative;
    font-size: 13px;
    font-weight: 600;
    color: #6b7683;
}
.size-tools b, .space-tools b {
    color: #1f3b5c;
}
.size-tools b {
    font-size: 11px;
    margin-top: -6px;
}
.size-tools i {
    position: absolute;
    right: 4px;
    bottom: 6px;
    border: 4px solid transparent;
    border-bottom-color: #c8391b;
    border-top: 0;
}
.size-tools .red-down {
    bottom: 18px;
    border-top: 4px solid #c8391b;
    border-bottom: 0;
}
.size-tools button:last-child b {
    margin-top: 6px;
}
.space-tools button {
    padding-bottom: 5px;
}
.space-tools svg {
    position: absolute;
    left: 5px;
    bottom: 4px;
    height: 7px;
}
.para {
    padding: 0 0 9px 7px;
}
.aligns .on {
    border: 1px solid #2f9fd8;
    background: #dcebfb;
}
.lists {
    margin: 5px 0 2px;
    padding-right: 4px;
}
.lists .caret {
    margin: 0 4px 0 2px;
}
.spacing {
    margin-top: 1px;
}
.group svg.i16 {
    height: 16px;
}
.spin {
    display: flex;
    align-items: center;
    height: 23px;
    margin-top: 12px;
}
.spin + .spin {
    margin-top: 8px;
}
.spin input {
    width: 63px;
    height: 23px;
    margin-left: 7px;
    padding: 0 2px;
    border: 1px solid #999;
    background: #fff;
}
.spin span {
    display: grid;
    width: 18px;
    height: 23px;
    place-items: center;
    border: 1px solid #999;
    background: linear-gradient(#999, #999) 0 50% / 100% 1px no-repeat, #f4f4f4;
}
.spin .ang {
    width: 5px;
    height: 5px;
    border-color: #000;
}
.lines {
    margin-top: 7px;
    padding: 0 5px 0 2px;
}
.lines .caret {
    margin-left: 2px;
}
.side-tabs {
    display: flex;
    flex-direction: column;
    align-items: center;
    flex: 1;
    padding-left: 3px;
}
.side-tabs button {
    display: flex;
    align-items: center;
    justify-content: center;
    width: 32px;
    height: 31px;
    margin-top: 4px;
    border-radius: 3px;
}
.side-tabs svg {
    width: 22px;
    height: 22px;
}
.side-tabs .active {
    height: 32px;
    border: 1px solid #a5a5a5;
    background: #f6f6f6;
}
.side-tabs .side-menu {
    height: 34px;
    margin-top: 0;
    border-bottom: 1px solid #ddd;
    border-radius: 0;
}
.side-menu i:first-child {
    width: 7px;
    height: 7px;
    background: repeating-linear-gradient(#222b3a 0 1px, transparent 1px 3px);
}
.side-menu .caret {
    margin: 9px 0 0 -3px;
}
.statusbar {
    display: flex;
    align-items: center;
    height: 22px;
    padding: 2px 10px 0 0;
}
.page-no {
    width: 233px;
    padding-left: 10px;
}
.page-style, .views, .zoomer, .percent {
    border-left: 1px solid #999;
}
.page-style {
    padding-left: 5px;
}
.views {
    display: flex;
    gap: 6px;
    padding: 1px 9px 1px 7px;
    margin-left: auto;
}
.views svg {
    height: 12px;
    fill: #f4f7fa;
    stroke: #7b8a99;
}
.v1 { width: 10px; }
.views .v2 {
    width: 20px;
    fill: #cfe1f6;
    stroke: #2c5f9e;
}
.v3 { width: 18px; }
.zoomer {
    display: flex;
    align-items: center;
    gap: 4px;
    padding: 0 8px 0 5px;
}
.zoomer + .percent {
    margin-left: 4px;
    padding-left: 4px;
}
.zoomer {
    margin-right: -4px;
}
.knob {
    width: 11px;
    height: 11px;
    border: 1px solid #2f6fa5;
    border-radius: 50%;
    background: #dcebf8;
    font: bold 10px/9px "Liberation Sans", sans-serif;
    color: #1d4b7d;
    text-align: center;
}
.zoomer input {
    width: 99px;
    height: 12px;
    appearance: none;
    background:
        linear-gradient(#777, #777) 0 50% / 100% 1px no-repeat,
        linear-gradient(#777, #777) 16px 50% / 1px 10px no-repeat;
}
.zoomer input::-webkit-slider-thumb {
    appearance: none;
    width: 8px;
    height: 8px;
    border: 1px solid #234a66;
    border-radius: 50%;
    background: #4f86ab;
}

/* Photos windows */
.window {
    position: absolute;
    display: flex;
    flex-direction: column;
    border: 1px solid #555;
    background: #fff;
}
.window.back {
    left: 252px;
    right: 307px;
    top: 3px;
    height: 638px;
}
.window.front {
    left: 253px;
    right: 306px;
    top: 308px;
    height: 460px;
    border-color: #222b36;
}
.window > * {
    border: solid #7fbaf9;
    border-width: 0 7px;
}
.win-title {
    display: flex;
    align-items: center;
    height: 32px;
    background: #f5f5f5;
}
.back .win-title {
    background: #e5e5e5;
}
.win-title span {
    flex: 1;
    padding-left: 12px;
    padding-top: 2px;
}
.front .win-title span, .back .win-title span {
    font-size: 12px;
    font-family: "Noto Sans", sans-serif;
    font-size: 11px;
}
.win-title button {
    display: flex;
    justify-content: center;
    width: 46px;
}
.win-title svg {
    width: 10px;
    height: 10px;
    stroke: #000;
    fill: none;
}
.back .win-title svg {
    stroke: #c8c8c8;
}
.photo-bar {
    display: flex;
    height: 48px;
}
.photo-bar button {
    display: flex;
    align-items: center;
    justify-content: center;
    width: 50px;
}
.photo-bar svg {
    fill: none;
    stroke: #111;
}
.photo-bar .all {
    width: 68px;
    background: #74b6fc;
    color: #fff;
}
.photo-bar .add {
    width: 68px;
    margin-right: auto;
}
.photo-bar .tools {
    width: 86px;
    padding-left: 20px;
    gap: 10px;
}
.photo-bar .chev {
    width: 8px;
    height: 8px;
    margin-top: -4px;
}
.photo-bar .far {
    width: 68px;
}
.photo-bar .dots {
    width: 48px;
}
.photo-view {
    flex: 1;
    overflow: hidden;
    color: #333;
}
.shot {
    position: relative;
    font-family: "Noto Sans", "Open Sans", sans-serif;
}
.shot-one {
    margin: -9px 52px 0 32px;
}
.shot-two {
    margin: 0 32px;
}
.variants {
    display: grid;
    grid-template-columns: repeat(5, 1fr);
    grid-auto-rows: 1fr;
    height: 99px;
    background: #fdfdfd;
    border: 1px solid #d8d8d8;
    box-shadow: 0 1px 5px rgba(0, 0, 0, .5);
}
.variants > div {
    display: flex;
    align-items: center;
    min-width: 0;
    padding-left: 2px;
    border: solid #d8d8d8;
    border-width: 1px 0 0 1px;
}
.variants input {
    appearance: none;
    flex: none;
    width: 18px;
    height: 18px;
    margin: -1px 1px 0 0;
    border: 3px solid #e3e7dc;
    border-bottom-color: #b9c2b2;
    background: linear-gradient(#1f2225, #44474b);
    box-shadow: 0 1px 2px rgba(0, 0, 0, .3);
}
.variants input:checked {
    background: linear-gradient(#0cb41f, #3ae08c);
    outline: 1px solid #222;
    outline-offset: -4px;
}
.variants label {
    padding-left: 11px;
    font: bold 8px/11px "Lato", sans-serif;
    white-space: nowrap;
}
.shot-two .variants {
    height: 117px;
    margin: 0 23px 0 27px;
}
.shot-two .variants > div {
    padding-left: 1px;
}
.shot-two .variants label {
    font: bold 7px/10px "Roboto", sans-serif;
}
.shot-two .variants input {
    width: 17px;
    height: 17px;
    margin-right: 2px;
}
.variants .hover {
    background: #dcfdfe;
    color: #000;
}
.chosen {
    margin-top: 7px;
    padding: 0 3px 0 2px;
    height: 300px;
    border: 1px solid #ddd;
    background: #fefefe;
    box-shadow: 0 1px 5px rgba(0, 0, 0, .4);
}
.shot-two .chosen {
    margin: 6px 23px 0 27px;
}
.chosen h4 {
    display: flex;
    align-items: flex-end;
    height: 23px;
    border-bottom: 2px solid #000;
    font-size: 14px;
    font-weight: 300;
    line-height: 18px;
}
.chosen h4 svg {
    width: 12px;
    height: 12px;
    margin: 0 6px 7px 0;
}
.chosen h4 button {
    margin: 0 11px 0 auto;
    font-weight: bold;
    font-size: 11px;
    color: #000;
}
.chosen-cols {
    display: grid;
    grid-template-columns: 1fr 1fr;
}
.app-head {
    display: flex;
    align-items: center;
    gap: 5px;
    margin-top: 11px;
    font: bold 9px/16px "Roboto", sans-serif;
    color: #222;
    white-space: nowrap;
}
.app-head svg {
    width: 8px;
    height: 8px;
}
.app-card {
    display: grid;
    grid-template-columns: 100px 1fr;
    grid-template-rows: 24px 38px;
    row-gap: 23px;
    margin: 2px 16px 0 14px;
    padding: 0 0 0 6px;
    box-shadow: 0 0 4px rgba(0, 0, 0, .25);
    font: bold 9px/14px "Roboto", sans-serif;
    color: #222;
    height: 120px;
}
.app-card b, .app-card label {
    display: flex;
    align-items: center;
    white-space: nowrap;
}
.app-card b svg {
    width: 8px;
    height: 9px;
    margin-right: 5px;
}
.app-card label:nth-of-type(n+2) {
    padding-left: 4px;
}
.app-card label:nth-of-type(3) {
    padding-left: 63px;
}
.app-card input, .autorun input {
    appearance: none;
    width: 14px;
    height: 14px;
    margin-right: 3px;
    border: 1px solid #b9b9b9;
    background: linear-gradient(#eee, #d8d8d8);
}
.app-card input:checked::after {
    content: "✔";
    display: block;
    font: bold 14px/12px "DejaVu Sans", sans-serif;
    color: #333;
}
.app-card .wifi-opt {
    font-family: "Lato", sans-serif;
    font-weight: normal;
    font-size: 8px;
}
.wifi-opt svg {
    width: 7px;
    height: 6px;
    margin-right: 6px;
}
.dashes {
    width: 3px;
    height: 120px;
    margin-top: 6px;
    background: repeating-linear-gradient(#111 0 7px, transparent 7px 9px);
}
.shot-two .dashes {
    height: 18px;
    background: repeating-linear-gradient(#111 0 6px, transparent 6px 7px);
}
.picked {
    padding: 9px 0 0 13px;
    font: bold 8px/16px "Noto Sans", sans-serif;
    color: #111;
}
.arrow {
    position: absolute;
    fill: none;
    stroke: #ee1c24;
    stroke-width: 4;
    stroke-linecap: round;
}
.arrow-one {
    left: 138px;
    top: 177px;
    width: 42px;
    height: 42px;
}
.arrow-two {
    left: 531px;
    top: 75px;
    width: 56px;
    height: 26px;
}

/* MZD-AIO application */
.aio-title {
    display: flex;
    align-items: center;
    height: 18px;
    border: solid #3a4a5c;
    border-width: 1px 0;
    background: #7fb9fa;
    font: 7px/16px "Open Sans", sans-serif;
    color: #000;
}
.aio-title span {
    flex: 1;
}
.aio-logo {
    width: 9px;
    height: 8px;
    margin: 0 3px 0 4px;
    border: 1px solid #17706d;
    background: #39b5ac;
}
.aio-title button {
    display: flex;
    align-items: center;
    justify-content: center;
    width: 27px;
    height: 16px;
    border-left: 1px solid #3a4a5c;
}
.aio-title .m {
    width: 6px;
    height: 2px;
    margin-top: 3px;
    background: #000;
}
.aio-title .x {
    width: 6px;
    height: 5px;
    border: 1px solid #000;
    border-top-width: 2px;
}
.aio-title .red {
    width: 23px;
    background: #c75b50;
    font-size: 11px;
    font-weight: bold;
}
.aio-menu {
    display: flex;
    align-items: center;
    height: 23px;
    border-bottom: 1px solid #222;
    background: #f0f0f0;
    font-size: 9px;
    color: #222;
}
.aio-menu .home {
    width: 13px;
    height: 11px;
    margin: 0 9px 0 10px;
}
.aio-menu a {
    display: flex;
    align-items: center;
    gap: 3px;
    padding: 0 9px 0 10px;
}
.aio-icons {
    display: flex;
    gap: 12px;
    margin: 0 5px 0 auto;
}
.aio-icons svg {
    width: 11px;
    height: 11px;
}
.aio-head {
    display: flex;
    align-items: center;
    height: 41px;
    padding: 0 31px 6px 10px;
    background: #009688;
    box-shadow: 0 1px 3px rgba(0, 0, 0, .7);
    color: #fff;
}
.burger {
    align-self: flex-start;
    display: grid;
    gap: 6px;
    width: 16px;
    margin-top: 7px;
}
.burger i {
    height: 1px;
    background: #000;
}
.aio-head h1 {
    margin: 0 11px 0 138px;
    font-size: 25px;
    line-height: 36px;
    font-weight: normal;
    letter-spacing: 3px;
    white-space: nowrap;
}
.aio-head small {
    font-size: 11px;
    font-weight: bold;
    letter-spacing: 2px;
    color: #9db6b2;
}
.aio-head b {
    font-size: 16px;
    color: #a9a9a9;
}
.compile {
    display: flex;
    align-items: center;
    justify-content: center;
    gap: 3px;
    width: 114px;
    height: 20px;
    margin-top: 2px;
    border-radius: 2px 0 0 2px;
    background: #4caf50;
    font-size: 7px;
    font-weight: bold;
    letter-spacing: 1px;
    white-space: nowrap;
}
.compile svg {
    width: 7px;
    height: 7px;
    fill: #fff;
}
.compile-more {
    display: flex;
    align-items: center;
    justify-content: center;
    width: 15px;
    height: 18px;
    border-radius: 0 2px 2px 0;
    background: #4caf50;
}
.compile-more .caret {
    border-width: 2px;
    border-bottom: 0;
    border-top-color: #fff;
}
.hole {
    fill: #111;
}
.compile .hole {
    fill: #4caf50;
}
.toggle {
    appearance: none;
    width: 34px;
    height: 19px;
    margin-left: 11px;
    border-radius: 10px;
    background: radial-gradient(circle at 25px 50%, #fff 7px, #2196f3 8px);
}
.hint {
    margin-left: auto;
    padding: 0 4px;
    font-size: 8px;
    color: #2d7c74;
    border-bottom: 1px solid #2d7c74;
}
.cog {
    display: flex;
    align-items: center;
    justify-content: center;
    width: 29px;
    height: 22px;
    border-radius: 2px;
    background: #000;
}
.cog svg {
    width: 11px;
    height: 11px;
    fill: #fff;
}
.options {
    display: flex;
    padding: 5px 1px 0 0;
    height: 60px;
    background: #fdfdfd;
}
.opt-tab {
    width: 24px;
    height: 54px;
    border: solid #333;
    border-width: 1px 0 1px 1px;
    background: #00dcff;
    writing-mode: vertical-rl;
    transform: rotate(180deg);
    font: bold 8px/10px "Noto Sans", sans-serif;
    text-align: center;
    color: #16485a;
}
.opt-grid {
    flex: 1;
    display: grid;
    grid-template-columns: 203px 135px 136px 1fr;
    grid-auto-rows: 20px;
    padding: 7px 0 0 12px;
}
.opt-grid label {
    display: flex;
    align-items: center;
    min-width: 0;
    font: 9px/18px "Open Sans", sans-serif;
    font-weight: 300;
    color: #111;
    white-space: nowrap;
}
.opt-grid input {
    appearance: none;
    flex: none;
    width: 16px;
    height: 16px;
    margin-right: 4px;
    border: 2px solid #d5dacd;
    border-radius: 50%;
    background: linear-gradient(#1f2225, #44474b);
    box-shadow: 0 1px 2px rgba(0, 0, 0, .3);
}
.opt-grid input:checked::after {
    content: "✔";
    display: block;
    font: 10px/12px "DejaVu Sans", sans-serif;
    text-align: center;
    color: #fff;
}
.opt-grid svg {
    width: 9px;
    height: 9px;
    margin-right: 2px;
}
.autorun {
    display: grid;
    grid-template-columns: 14px auto;
    grid-auto-rows: 18px;
    column-gap: 3px;
    align-items: center;
    width: 80px;
    height: 45px;
    padding: 5px 2px 0 2px;
    border: 1px dashed #1a237e;
    font-size: 11px;
    font-weight: bold;
    color: #111;
    white-space: nowrap;
}
.autorun svg {
    width: 12px;
    height: 12px;
    margin-left: 4px;
}
.autorun span:last-child {
    padding-left: 5px;
}

/* Taskbar */
.taskbar {
    display: flex;
    height: 30px;
    background: linear-gradient(90deg, #e9d6d9 0, #ead9dc 18%, #ececec 25%, #ececec 74%, #d6dfe5 79%, #dfdfe3 84%, #e8d2d5 92%, #e6d3d7 100%);
}
.taskbar button {
    display: flex;
    align-items: center;
    justify-content: center;
    width: 37px;
}
.taskbar button:first-child {
    margin-left: -1px;
}
.taskbar .line {
    fill: none;
    stroke: #000;
}
.taskbar .current {
    background: #f8f8f8;
    border-bottom: 2px solid #76b6f7;
    padding-top: 2px;
}
.taskbar .open {
    position: relative;
}
.open::after {
    content: "";
    position: absolute;
    left: 4px;
    right: 5px;
    bottom: 0;
    height: 2px;
    background: #76b6f7;
}
.tray {
    display: flex;
    align-items: center;
    margin-left: auto;
    margin-right: 4px;
    padding-right: 20px;
    border-right: 1px solid #cdbec2;
}
.tray .ang {
    width: 8px;
    height: 8px;
    margin: 5px 12px 0 0;
    border-color: #000;
}
.tray svg {
    margin-right: 9px;
}
.tray span {
    margin: 0 14px 0 1px;
}
.tray time {
    margin-right: 17px;
}
.tray .note {
    margin-right: 0;
}
```
